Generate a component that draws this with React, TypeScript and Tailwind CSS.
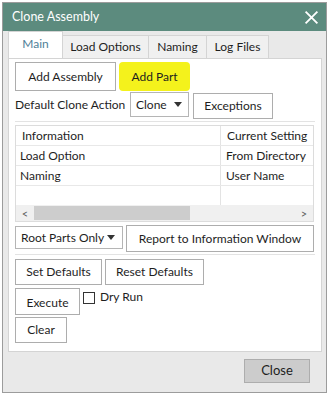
import { ReactNode } from 'react'

function Btn({ children, className = '' }: { children: ReactNode; className?: string }) {
  return (
    <div className={`flex items-center justify-center whitespace-nowrap border border-[#adadad] bg-white text-[#1e1e1e] ${className}`}>
      {children}
    </div>
  )
}

function Caret() {
  return (
    <svg width="8" height="5" viewBox="0 0 8 5" className="shrink-0">
      <path d="M0 0h8L4 5z" fill="#333" />
    </svg>
  )
}

export default function App() {
  return (
    <div className="h-[400px] w-[330px] bg-white pl-[2px] pt-[2px] font-['Lato','Noto_Sans',sans-serif] text-[12px]">
      <div className="flex h-[391px] w-[325px] flex-col border border-[#9c9c9c] bg-[#e9e9e9]">
        {/* title bar */}
        <div className="flex h-[28px] shrink-0 items-center justify-between bg-[#5c8b7e] pl-[9px] pr-[7px] text-[12.5px] text-white">
          <span>Clone Assembly</span>
          <svg width="15" height="15" viewBox="0 0 14 14">
            <path d="M1.5 1.5l11 11M12.5 1.5l-11 11" stroke="#fff" strokeWidth="1.7" />
          </svg>
        </div>

        {/* tabs */}
        <div className="flex h-[27px] items-end pl-[5px] text-[#1e1e1e]">
          <div className="relative z-10 flex h-[27px] w-[55px] items-center justify-center border border-b-0 border-[#d4d4d4] bg-white pb-[2px] text-[#4f7f98]">
            Main
          </div>
          <div className="flex h-[23px] w-[86px] items-center justify-center border border-l-0 border-b-0 border-[#d4d4d4] bg-[#f0f0f0]">
            Load Options
          </div>
          <div className="flex h-[23px] w-[58px] items-center justify-center border border-l-0 border-b-0 border-[#d4d4d4] bg-[#f0f0f0]">
            Naming
          </div>
          <div className="flex h-[23px] w-[62px] items-center justify-center border border-l-0 border-b-0 border-[#d4d4d4] bg-[#f0f0f0]">
            Log Files
          </div>
        </div>

        {/* panel */}
        <div className="ml-[5px] flex h-[294px] w-[314px] flex-col border border-[#d4d4d4] bg-white px-[6px] pt-[3px] text-[#1e1e1e]">
          <div className="flex gap-[3px]">
            <Btn className="h-[29px] w-[101px]">Add Assembly</Btn>
            <div className="flex h-[29px] w-[71px] items-center justify-center rounded-[4px] bg-[#f4f21c]">Add Part</div>
          </div>

          <div className="mt-[1px] flex items-start">
            <span className="mt-[4px] w-[115px] whitespace-nowrap">Default Clone Action</span>
            <div className="flex h-[25px] w-[59px] items-center justify-between border border-[#b5b5b5] pl-[5px] pr-[6px]">
              <span>Clone</span>
              <Caret />
            </div>
            <Btn className="ml-[4px] mt-[1px] h-[26px] w-[80px]">Exceptions</Btn>
          </div>

          {/* table */}
          <div className="mt-[2px] border-t border-[#e3e3e3] pt-[3px]">
            <div className="flex h-[97px] w-[299px] flex-col border border-[#dcdcdc] leading-[19px]">
              <div className="flex h-[20px] border-b border-[#e8e8e8]">
                <div className="w-[205px] border-r border-[#e3e3e3] pl-[6px]">Information</div>
                <div className="flex-1 whitespace-nowrap pl-[6px]">Current Setting</div>
              </div>
              <div className="flex h-[20px] border-b border-[#e8e8e8]">
                <div className="w-[205px] border-r border-[#e3e3e3] pl-[4px]">Load Option</div>
                <div className="flex-1 whitespace-nowrap pl-[5px]">From Directory</div>
              </div>
              <div className="flex h-[20px] border-b border-[#e8e8e8]">
                <div className="w-[205px] border-r border-[#e3e3e3] pl-[4px]">Naming</div>
                <div className="flex-1 whitespace-nowrap pl-[5px]">User Name</div>
              </div>
              <div className="flex h-[20px]">
                <div className="w-[205px] border-r border-[#e3e3e3]" />
              </div>
              <div className="flex h-[16px] items-center bg-[#f0f0f0] text-[#606060]">
                <span className="w-[18px] text-center text-[11px]">&lt;</span>
                <div className="h-[14px] w-[156px] bg-[#cdcdcd]" />
                <div className="flex-1" />
                <span className="w-[18px] text-center text-[11px]">&gt;</span>
              </div>
            </div>
          </div>

          <div className="mt-[4px] flex items-start gap-[3px]">
            <div className="flex h-[23px] w-[108px] items-center justify-between whitespace-nowrap border border-[#b5b5b5] pl-[5px] pr-[7px]">
              <span>Root Parts Only</span>
              <Caret />
            </div>
            <Btn className="-mt-[1px] h-[27px] w-[188px]">Report to Information Window</Btn>
          </div>

          <div className="mt-[2px] border-t border-[#e3e3e3] pt-[4px]">
            <div className="flex gap-[3px]">
              <Btn className="h-[26px] w-[87px]">Set Defaults</Btn>
              <Btn className="h-[26px] w-[99px]">Reset Defaults</Btn>
            </div>
            <div className="mt-[3px] flex items-start">
              <Btn className="h-[27px] w-[65px] pt-[2px]">Execute</Btn>
              <div className="ml-[3px] mt-[4px] h-[12px] w-[12px] border border-[#333]" />
              <span className="ml-[5px] mt-[0px]">Dry Run</span>
            </div>
            <Btn className="mt-[2px] h-[26px] w-[52px]">Clear</Btn>
          </div>
        </div>

        {/* footer */}
        <div className="flex justify-end pr-[16px] pt-[7px]">
          <div className="flex h-[24px] w-[66px] items-center justify-center border border-[#adadad] bg-[#cccccc] text-[13px] text-[#1e1e1e]">
            Close
          </div>
        </div>
      </div>
    </div>
  )
}
